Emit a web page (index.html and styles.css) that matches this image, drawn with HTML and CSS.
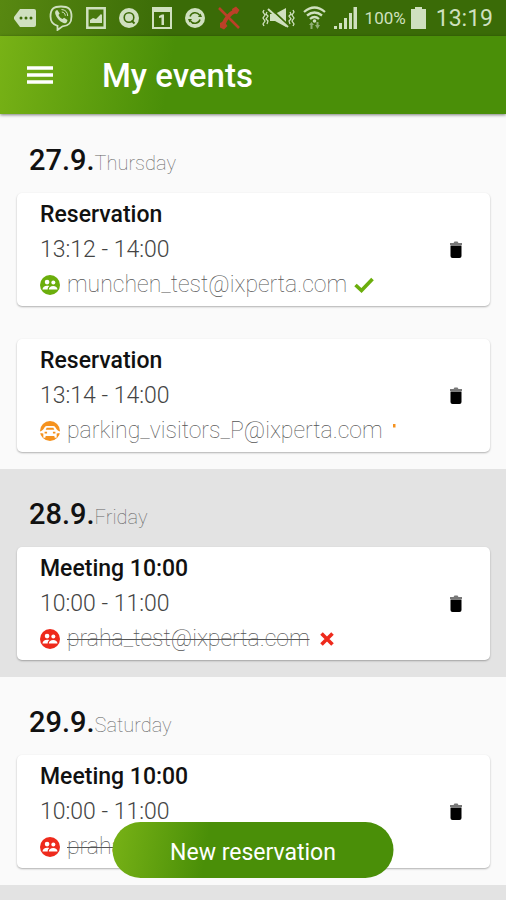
FILE: index.html
```
<!DOCTYPE html>
<html lang="en">
<head>
    <meta charset="UTF-8">
    <meta name="viewport" content="width=device-width, initial-scale=1.0">
    <title>My events</title>
    <link rel="stylesheet" href="styles.css">
</head>
<body>
    <!-- Shared icons -->
    <svg class="sprite" aria-hidden="true">
        <symbol id="icon-group" viewBox="0 0 24 24">
            <circle cx="12" cy="12" r="12" fill="currentColor"/>
            <g fill="#fff">
                <circle cx="8.5" cy="8.5" r="2.8"/>
                <circle cx="16" cy="9" r="2.4"/>
                <path d="M3 17.500c0-3.200 2.600-4.700 5.500-4.700 1 0 1.900.2 2.700.5-1.400 1-2 2.300-2 4.200zM10.600 17.500c0-2.900 2.200-4.400 5.200-4.400s5.200 1.500 5.200 4.400z"/>
            </g>
        </symbol>
        <symbol id="icon-car" viewBox="0 0 24 24">
            <circle cx="12" cy="12" r="12" fill="currentColor"/>
            <path fill="#fff" d="M0 12.500C2 12 4 11 5 8.500Q6 6 8 6h8q2 0 3 2.500c1 2.500 3 3.500 5 4v2l-4 .5v5h-3v-2H7v2H4v-5l-4-.5z"/>
            <path fill="currentColor" d="M8 8h8l1.200 2.500H6.800zM5.500 13h3v2h-3zM15.500 13h3v2h-3zM7 18h10l1 4H6z"/>
        </symbol>
        <symbol id="icon-trash" viewBox="0 0 14 18">
            <path fill="#777" d="M1 2h3.500l1-1.500h3L9.500 2H13v2H1z"/>
            <path fill="#000" d="M1.500 4.500h11V15q0 2-2 2h-7q-2 0-2-2z"/>
        </symbol>
        <symbol id="icon-cross" viewBox="0 0 14 14">
            <path d="M1.500 1.500l11 11M12.500 1.500l-11 11" fill="none" stroke="currentColor" stroke-width="3.600"/>
        </symbol>
    </svg>

    <div class="status-bar">
        <div class="status-group notifications">
            <svg width="22" height="18" viewBox="0 0 22 18">
                <path fill="#cfe0bf" d="M6 0h14q2 0 2 2v14q0 2-2 2H6L0 10V8z"/>
                <g fill="#3d6b08"><circle cx="7" cy="9" r="1.500"/><circle cx="12" cy="9" r="1.500"/><circle cx="17" cy="9" r="1.500"/></g>
            </svg>
            <svg width="24" height="26" viewBox="0 0 24 26">
                <path fill="none" stroke="#cfe0bf" stroke-width="1.800" d="M12 1.500c7 0 10.500 2 10.500 10 0 7-3 9.500-9 9.800L8.500 25v-4.200C3.500 19.500 1.500 17 1.500 11.500c0-8 3.500-10 10.500-10z"/>
                <path fill="#cfe0bf" d="M7 5.500l1.300-.5 2.400 3.500-1.200 1.600c.8 2 2 3.100 4 4l1.600-1.300 3.400 2.300-.5 1.600c-.8 1.500-2 1.800-3.500 1.200-4.200-1.800-7-5-8.200-9-.3-1.500-.2-2.600.7-3.400z"/>
                <path fill="none" stroke="#cfe0bf" d="M12.500 4.500c4 .2 6 2.500 6.200 6.500M12.800 7c2.200.3 3.300 1.400 3.500 3.700"/>
            </svg>
            <svg width="20" height="22" viewBox="0 0 20 22">
                <path fill="none" stroke="#cfe0bf" stroke-width="2.500" d="M1.300 1.300h17.400v19.400H1.300z"/>
                <path fill="#cfe0bf" d="M4 16v-3l3-2 3 1 5-5 1 1v8z"/>
            </svg>
            <svg width="20" height="20" viewBox="0 0 20 20">
                <circle cx="10" cy="10" r="10" fill="#cfe0bf"/>
                <circle cx="10" cy="9.500" r="4.800" fill="none" stroke="#3d6b08" stroke-width="1.600"/>
                <path stroke="#3d6b08" stroke-width="2" d="M12.500 12.500l3 3"/>
            </svg>
            <svg width="20" height="22" viewBox="0 0 20 22">
                <path fill="none" stroke="#cfe0bf" stroke-width="2" d="M1 1h18v20H1z"/>
                <path fill="#cfe0bf" d="M1 1h18v4H1zM7 9l3-1.500h2V18H9.500v-7.500L7 11z"/>
            </svg>
            <svg width="20" height="20" viewBox="0 0 20 20">
                <circle cx="10" cy="10" r="10" fill="#cfe0bf"/>
                <path fill="none" stroke="#3d6b08" stroke-width="1.500" d="M5 8.500a5.300 5.300 0 0 1 9.500-1.500M15 11.500A5.300 5.300 0 0 1 5.500 13"/>
                <path fill="#3d6b08" d="M13 9h4l-1.500-3.500zM7 11H3l1.500 3.500z"/>
            </svg>
            <svg width="22" height="24" viewBox="0 0 22 24">
                <path fill="none" stroke="#bd4028" stroke-width="2.500" d="M1 2l20 20"/>
                <path fill="none" stroke="#bd4028" stroke-width="4" d="M17 5Q9 9 5 19"/>
                <path fill="#bd4028" d="M14 3l4-2.500L21.500 4 19 8l-4-1zM2 17l4-2 3.500 5L6 23.500l-4-2z"/>
            </svg>
        </div>
        <div class="status-group system">
            <svg width="33" height="22" viewBox="0 0 33 22">
                <path fill="#cfe0bf" d="M8 7h5l11-6v19l-11-6H8z"/>
                <path stroke="#3d6b08" stroke-width="2" d="M8 1l19 18"/>
                <path stroke="#cfe0bf" stroke-width="2" d="M6 2l20 18"/>
                <path fill="none" stroke="#cfe0bf" stroke-width="1.300" d="M2 3l-1 2 2 3-2 3 2 3-2 3 1 2M5 5L4 7l2 2-2 3 2 2-1 3M31 3l1 2-2 3 2 3-2 3 2 3-1 2M28 5l1 2-2 2 2 3-2 2 1 3"/>
            </svg>
            <svg width="23" height="24" viewBox="0 0 23 24">
                <path fill="none" stroke="#cfe0bf" stroke-width="2.300" d="M1 6q10.500-9 21 0M4 9.500q7.500-6 15 0M7 13q4.500-4 9 0"/>
                <circle cx="11.500" cy="15" r="1.800" fill="#cfe0bf"/>
                <path fill="#8fae75" d="M6 19l2.500-3 2.500 3H9.500v4h-2v-4zM12 19h1.500v-3h2v3H17l-2.500 4z"/>
            </svg>
            <svg width="23" height="22" viewBox="0 0 23 22">
                <path fill="#cfe0bf" d="M0 19h3v3H0zM5 16h3v6H5zM10 11h3v11h-3zM15 6h3v16h-3zM19.500 0H23v22h-3.500z"/>
            </svg>
            <span class="battery-level">100%</span>
            <svg class="battery" width="15" height="22" viewBox="0 0 15 22">
                <path fill="#cfe0bf" d="M4 0h7v2h4v20H0V2h4z"/>
            </svg>
            <span class="clock">13:19</span>
        </div>
    </div>

    <header class="app-bar">
        <button class="menu-btn" aria-label="Menu">
            <svg width="26" height="18" viewBox="0 0 26 18">
                <path stroke="#fff" stroke-width="3.500" d="M0 2h26M0 9h26M0 16h26"/>
            </svg>
        </button>
        <h1>My events</h1>
    </header>

    <main class="event-list">
        <section class="day">
            <h2>27.9.<span class="weekday">Thursday</span></h2>
            <article class="card">
                <div class="details">
                    <h3>Reservation</h3>
                    <p class="time">13:12 - 14:00</p>
                    <p class="resource">
                        <svg class="type accepted"><use href="#icon-group"/></svg>
                        <span class="email">munchen_test@ixperta.com</span>
                        <svg class="accepted" width="20" height="16" viewBox="0 0 20 16"><path d="M1.500 8l6 5.500L18.500 2" fill="none" stroke="currentColor" stroke-width="3.600"/></svg>
                    </p>
                </div>
                <button class="delete-btn" aria-label="Delete"><svg><use href="#icon-trash"/></svg></button>
            </article>
            <article class="card">
                <div class="details">
                    <h3>Reservation</h3>
                    <p class="time">13:14 - 14:00</p>
                    <p class="resource">
                        <svg class="type pending"><use href="#icon-car"/></svg>
                        <span class="email">parking_visitors_P@ixperta.com</span>
                        <svg class="pending" width="8" height="16" viewBox="0 0 8 16"><path d="M3 1h2.500v3.500H3z" fill="currentColor"/></svg>
                    </p>
                </div>
                <button class="delete-btn" aria-label="Delete"><svg><use href="#icon-trash"/></svg></button>
            </article>
        </section>

        <section class="day">
            <h2>28.9.<span class="weekday">Friday</span></h2>
            <article class="card">
                <div class="details">
                    <h3>Meeting 10:00</h3>
                    <p class="time">10:00 - 11:00</p>
                    <p class="resource">
                        <svg class="type declined"><use href="#icon-group"/></svg>
                        <s class="email">praha_test@ixperta.com</s>
                        <svg class="mark declined"><use href="#icon-cross"/></svg>
                    </p>
                </div>
                <button class="delete-btn" aria-label="Delete"><svg><use href="#icon-trash"/></svg></button>
            </article>
        </section>

        <section class="day">
            <h2>29.9.<span class="weekday">Saturday</span></h2>
            <article class="card">
                <div class="details">
                    <h3>Meeting 10:00</h3>
                    <p class="time">10:00 - 11:00</p>
                    <p class="resource">
                        <svg class="type declined"><use href="#icon-group"/></svg>
                        <s class="email">praha_test@ixperta.com</s>
                        <svg class="mark declined"><use href="#icon-cross"/></svg>
                    </p>
                </div>
                <button class="delete-btn" aria-label="Delete"><svg><use href="#icon-trash"/></svg></button>
            </article>
        </section>

        <section class="day"></section>
    </main>

    <button class="new-btn">New reservation</button>
</body>
</html>
```

FILE: styles.css
```
* {
    box-sizing: border-box;
}
body {
    font-family: Roboto, "Liberation Sans", sans-serif;
    margin: 0;
    background: #fafafa;
    color: #111;
    display: flex;
    flex-direction: column;
    height: 100vh;
    overflow: hidden;
}
h1, h2, h3, p {
    margin: 0;
}
button {
    font-family: inherit;
    border: none;
    padding: 0;
    background: none;
    cursor: pointer;
}
svg {
    display: block;
    flex-shrink: 0;
}
.sprite {
    position: absolute;
    width: 0;
    height: 0;
}
.status-bar {
    display: flex;
    justify-content: space-between;
    align-items: center;
    flex-shrink: 0;
    height: 36px;
    padding: 0 13px 0 14px;
    background: linear-gradient(100deg, #588811 0%, #3a6b07 34%);
    color: #cfe0bf;
}
.status-group {
    display: flex;
    align-items: center;
}
.notifications {
    gap: 13px;
}
.system {
    gap: 8px;
}
.battery-level {
    font-size: 17px;
}
.battery {
    margin-left: -3px;
}
.clock {
    margin-left: 2px;
    font-size: 23px;
}
.app-bar {
    display: flex;
    align-items: center;
    gap: 49px;
    flex-shrink: 0;
    height: 78px;
    padding: 0 27px;
    background: linear-gradient(100deg, #78b216 0%, #4a8f08 34%);
    color: #fff;
    box-shadow: 0 1px 3px rgba(0, 0, 0, 0.5);
    z-index: 1;
}
.app-bar h1 {
    font-size: 33px;
    font-weight: 500;
}
.event-list {
    flex: 1;
    overflow-y: auto;
    padding-top: 1px;
    scrollbar-width: none;
}
.day {
    padding: 0 16px 17px 17px;
    min-height: 78px;
}
.day:nth-child(even) {
    background: #e3e3e3;
}
.day h2 {
    height: 78px;
    padding: 11px 12px 0;
    font-size: 29px;
    font-weight: 500;
    line-height: 68px;
}
.weekday {
    font-size: 20px;
    font-weight: 100;
    color: #666;
}
.card {
    display: flex;
    align-items: center;
    justify-content: space-between;
    padding: 4px 27px 4px 23px;
    background: #fff;
    border-radius: 5px;
    box-shadow: 0 1px 2px rgba(0, 0, 0, 0.3);
}
.card + .card {
    margin-top: 33px;
}
.card h3 {
    font-size: 23px;
    font-weight: 500;
    line-height: 35px;
}
.time {
    font-size: 23px;
    font-weight: 300;
    line-height: 35px;
    color: #444;
}
.resource {
    display: flex;
    align-items: center;
    gap: 7px;
    font-size: 23px;
    line-height: 35px;
}
.email {
    font-weight: 100;
    color: #555;
    text-decoration-thickness: 1px;
}
.type {
    width: 20px;
    height: 20px;
}
.mark {
    width: 20px;
    height: 14px;
}
.accepted {
    color: #6bae0c;
}
.pending {
    color: #f5921e;
}
.declined {
    color: #ee2a1c;
}
.delete-btn svg {
    width: 14px;
    height: 18px;
}
.new-btn {
    position: fixed;
    bottom: 22px;
    left: 50%;
    z-index: 2;
    width: 281px;
    height: 56px;
    padding-top: 4px;
    transform: translateX(-50%);
    border-radius: 28px;
    background: linear-gradient(100deg, #78b216 0%, #4a8f08 34%);
    color: #fff;
    font-size: 23px;
}
```
